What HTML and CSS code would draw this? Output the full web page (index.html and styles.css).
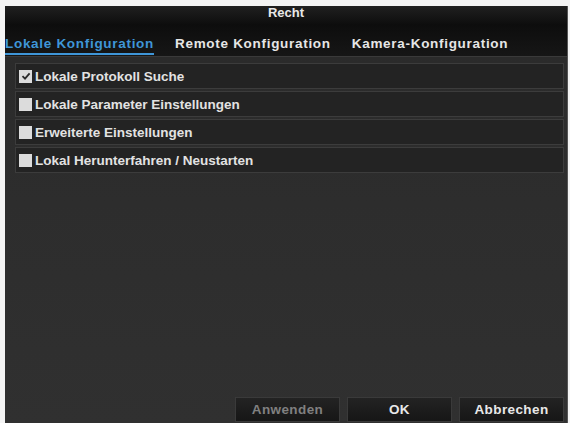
FILE: index.html
```html
<!DOCTYPE html>
<html>
<head>
<meta charset="utf-8">
<link rel="stylesheet" href="styles.css">
</head>
<body>
<div class="window">
  <div class="title">Recht</div>
  <div class="tabs">
    <span class="tab active">Lokale Konfiguration</span>
    <span class="tab">Remote Konfiguration</span>
    <span class="tab">Kamera-Konfiguration</span>
  </div>
  <div class="content">
    <div class="list">
      <div class="row"><span class="box checked"><svg viewBox="0 0 10 10" width="10" height="10"><path d="M1.5 5.2 L4 7.6 L8.6 2.4" fill="none" stroke="#2a2a2a" stroke-width="1.8"/></svg></span>Lokale Protokoll Suche</div>
      <div class="row"><span class="box"></span>Lokale Parameter Einstellungen</div>
      <div class="row"><span class="box"></span>Erweiterte Einstellungen</div>
      <div class="row"><span class="box"></span>Lokal Herunterfahren / Neustarten</div>
    </div>
    <div class="buttons">
      <div class="btn disabled">Anwenden</div>
      <div class="btn">OK</div>
      <div class="btn">Abbrechen</div>
    </div>
  </div>
</div>
</body>
</html>
```
FILE: styles.css
```css
html, body { margin: 0; padding: 0; background: #f4f4f4; }
body { padding: 6px 2px 0 5px; width: 570px; height: 423px; box-sizing: border-box; overflow: hidden;
  font-family: "Liberation Sans", Arial, sans-serif; font-weight: bold; font-size: 12px; }
.window { height: 417px; display: flex; flex-direction: column; background: #2f2f2f; border-right: 1px solid #555; }
.title { height: 18px; line-height: 14px; text-align: center; color: #e8e8e8; font-size: 13px;
  background: linear-gradient(#202020, #0e0e0e); }
.tabs { height: 33px; display: flex; align-items: flex-start; gap: 21px; box-sizing: border-box; padding-top: 12px;
  background: linear-gradient(#0d0d0d, #161616); border-bottom: 1px solid #3a3a3a; }
.tab { color: #e6e6e6; font-size: 13.5px; letter-spacing: 0.7px; line-height: 16px; }
.tab.active { color: #3f96d8; border-bottom: 2px solid #3f96d8; padding-bottom: 1px; }
.content { flex: 1; display: flex; flex-direction: column; padding: 6px 3px 0 10px;
  background: linear-gradient(#2b2b2b, #303030); }
.list { flex: 1; display: flex; flex-direction: column; gap: 2px; }
.row { height: 24px; display: flex; align-items: center; background: #232323; border: 1px solid #3c3c3c;
  color: #e2e2e2; font-size: 13.5px; padding-left: 3px; }
.box { width: 13px; height: 13px; background: #dcdcdc; margin-right: 3px; display: flex; align-items: center; justify-content: center; }
.buttons { display: flex; justify-content: flex-end; gap: 7px; padding-bottom: 1px; }
.btn { width: 103px; height: 23px; display: flex; align-items: center; justify-content: center;
  background: linear-gradient(#232323, #161616); border: 1px solid #3a3a3a; color: #e8e8e8; font-size: 13.5px; letter-spacing: 0.4px; }
.btn.disabled { color: #808080; }
```
